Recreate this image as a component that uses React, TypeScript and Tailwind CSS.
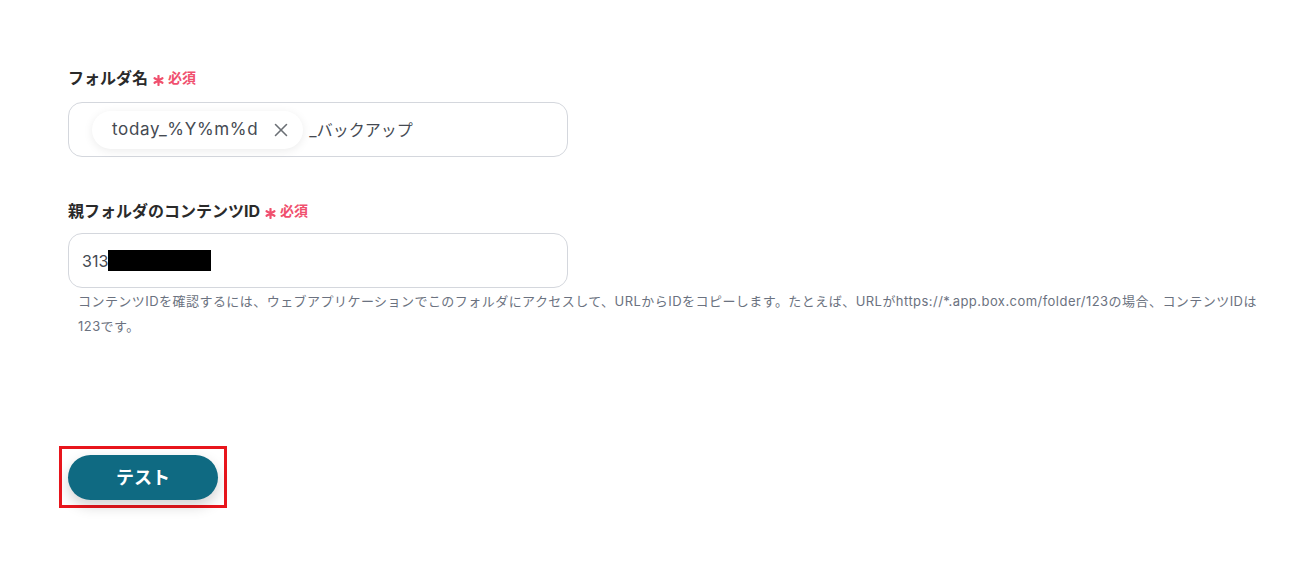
import { X } from 'lucide-react';

const font = "font-['Inter','Noto_Sans_CJK_JP',sans-serif]";

function Label({ text }: { text: string }) {
  return (
    <div className="flex items-center text-[16px] font-bold text-[#2a2a2a] leading-[24px]">
      <span>{text}</span>
      <svg viewBox="0 0 12 12" className="w-[11px] h-[11px] ml-[5px] mr-[4px] mt-[4px] text-[#f0506e]" stroke="currentColor" strokeWidth={2.4} strokeLinecap="round">
        <path d="M6 1v10M1.7 3.5l8.6 5M1.7 8.5l8.6-5" />
      </svg>
      <span className="text-[#f0506e] text-[14px]">必須</span>
    </div>
  );
}

export default function App() {
  return (
    <div className={`${font} w-[1311px] h-[573px] bg-white pl-[68px] pt-[66px]`}>
      <Label text="フォルダ名" />
      <div className="mt-[12px] w-[500px] h-[55px] rounded-[14px] border border-[#d4d7dd] bg-white flex items-center pl-[23px]">
        <div className="h-[38px] rounded-full bg-white shadow-[0_2px_10px_rgba(0,0,0,0.08)] flex items-center pl-[20px] pr-[11px] gap-[12px] text-[17px] text-[#454a52] tracking-[0.04em]">
          <span>today_%Y%m%d</span>
          <X className="w-[22px] h-[22px] text-[#6b6f75]" strokeWidth={1.7} />
        </div>
        <span className="ml-[6px] text-[16px] text-[#454a52]">_バックアップ</span>
      </div>

      <div className="mt-[42px]">
        <Label text="親フォルダのコンテンツID" />
      </div>
      <div className="mt-[10px] w-[500px] h-[55px] rounded-[14px] border border-[#d4d7dd] bg-white flex items-center pl-[13px]">
        <span className="text-[16px] text-[#454a52]">313</span>
        <span className="w-[103px] h-[21px] bg-black"></span>
      </div>
      <p className="mt-[1px] ml-[10px] w-[1182px] text-[13px] leading-[25px] tracking-[0.035em] text-[#6b7280]">
        コンテンツIDを確認するには、ウェブアプリケーションでこのフォルダにアクセスして、URLからIDをコピーします。たとえば、URLがhttps://*.app.box.com/folder/123の場合、コンテンツIDは123です。
      </p>

      <div className="mt-[107px] -ml-[9px] w-[168px] h-[62px] border-[3px] border-[#e8151c] flex items-center pl-[6px]">
        <button className="w-[150px] h-[45px] rounded-full bg-[#0f6a82] text-white font-bold text-[18px] shadow-[0_6px_14px_rgba(0,0,0,0.18)]">
          テスト
        </button>
      </div>
    </div>
  );
}
